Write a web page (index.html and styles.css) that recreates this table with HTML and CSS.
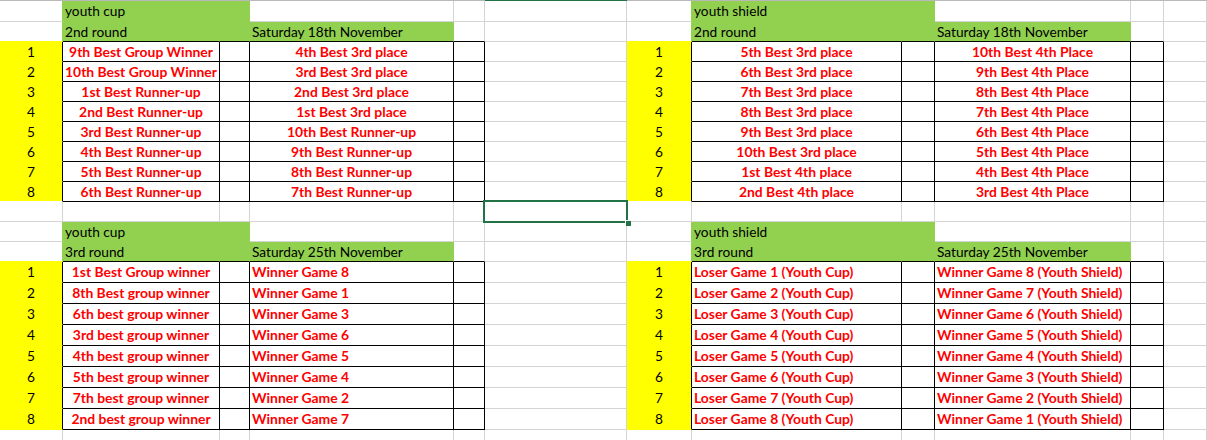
FILE: index.html
```html
<!DOCTYPE html>
<html lang="en">
<head>
<meta charset="utf-8">
<title>Youth Cup / Youth Shield fixtures</title>
<link rel="stylesheet" href="styles.css">
</head>
<body>
<div class="sheet">
  <div class="row hdr">
    <div class="h"></div><div class="h"></div><div class="h"></div><div class="h"></div><div class="h"></div><div class="h sel"></div><div class="h"></div><div class="h"></div><div class="h"></div><div class="h"></div><div class="h"></div><div class="h"></div>
  </div>

  <!-- row 1 -->
  <div class="row r21">
    <div class="c rg"></div><div class="c g">youth cup</div><div class="c g"></div><div class="c"></div><div class="c"></div><div class="c"></div>
    <div class="c rg"></div><div class="c g">youth shield</div><div class="c g"></div><div class="c"></div><div class="c"></div><div class="c"></div>
  </div>
  <!-- row 2 -->
  <div class="row">
    <div class="c rg by"></div><div class="c g bk">2nd round</div><div class="c g bk"></div><div class="c g bk">Saturday 18th November</div><div class="c bk"></div><div class="c"></div>
    <div class="c rg by"></div><div class="c g bk">2nd round</div><div class="c g bk"></div><div class="c g bk">Saturday 18th November</div><div class="c bk"></div><div class="c"></div>
  </div>
  <!-- rows 3-10 -->
  <div class="row">
    <div class="c y num">1</div><div class="c t red ctr">9th Best Group Winner</div><div class="c t"></div><div class="c t red ctr">4th Best 3rd place</div><div class="c t"></div><div class="c"></div>
    <div class="c y num">1</div><div class="c t red ctr">5th Best 3rd place</div><div class="c t"></div><div class="c t red ctr">10th Best 4th Place</div><div class="c t"></div><div class="c"></div>
  </div>
  <div class="row">
    <div class="c y num">2</div><div class="c t red ctr">10th Best Group Winner</div><div class="c t"></div><div class="c t red ctr">3rd Best 3rd place</div><div class="c t"></div><div class="c"></div>
    <div class="c y num">2</div><div class="c t red ctr">6th Best 3rd place</div><div class="c t"></div><div class="c t red ctr">9th Best 4th Place</div><div class="c t"></div><div class="c"></div>
  </div>
  <div class="row">
    <div class="c y num">3</div><div class="c t red ctr">1st Best Runner-up</div><div class="c t"></div><div class="c t red ctr">2nd Best 3rd place</div><div class="c t"></div><div class="c"></div>
    <div class="c y num">3</div><div class="c t red ctr">7th Best 3rd place</div><div class="c t"></div><div class="c t red ctr">8th Best 4th Place</div><div class="c t"></div><div class="c"></div>
  </div>
  <div class="row">
    <div class="c y num">4</div><div class="c t red ctr">2nd Best Runner-up</div><div class="c t"></div><div class="c t red ctr">1st Best 3rd place</div><div class="c t"></div><div class="c"></div>
    <div class="c y num">4</div><div class="c t red ctr">8th Best 3rd place</div><div class="c t"></div><div class="c t red ctr">7th Best 4th Place</div><div class="c t"></div><div class="c"></div>
  </div>
  <div class="row">
    <div class="c y num">5</div><div class="c t red ctr">3rd Best Runner-up</div><div class="c t"></div><div class="c t red ctr">10th Best Runner-up</div><div class="c t"></div><div class="c"></div>
    <div class="c y num">5</div><div class="c t red ctr">9th Best 3rd place</div><div class="c t"></div><div class="c t red ctr">6th Best 4th Place</div><div class="c t"></div><div class="c"></div>
  </div>
  <div class="row">
    <div class="c y num">6</div><div class="c t red ctr">4th Best Runner-up</div><div class="c t"></div><div class="c t red ctr">9th Best Runner-up</div><div class="c t"></div><div class="c"></div>
    <div class="c y num">6</div><div class="c t red ctr">10th Best 3rd place</div><div class="c t"></div><div class="c t red ctr">5th Best 4th Place</div><div class="c t"></div><div class="c"></div>
  </div>
  <div class="row">
    <div class="c y num">7</div><div class="c t red ctr">5th Best Runner-up</div><div class="c t"></div><div class="c t red ctr">8th Best Runner-up</div><div class="c t"></div><div class="c"></div>
    <div class="c y num">7</div><div class="c t red ctr">1st Best 4th place</div><div class="c t"></div><div class="c t red ctr">4th Best 4th Place</div><div class="c t"></div><div class="c"></div>
  </div>
  <div class="row">
    <div class="c y bw num">8</div><div class="c t red ctr">6th Best Runner-up</div><div class="c t"></div><div class="c t red ctr">7th Best Runner-up</div><div class="c t"></div><div class="c"></div>
    <div class="c y bw num">8</div><div class="c t red ctr">2nd Best 4th place</div><div class="c t"></div><div class="c t red ctr">3rd Best 4th Place</div><div class="c t"></div><div class="c"></div>
  </div>
  <!-- row 11 -->
  <div class="row">
    <div class="c"></div><div class="c"></div><div class="c"></div><div class="c"></div><div class="c"></div><div class="c"></div>
    <div class="c"></div><div class="c"></div><div class="c"></div><div class="c"></div><div class="c"></div><div class="c"></div>
  </div>
  <!-- row 12 -->
  <div class="row">
    <div class="c rg"></div><div class="c g">youth cup</div><div class="c g"></div><div class="c"></div><div class="c"></div><div class="c"></div>
    <div class="c rg"></div><div class="c g">youth shield</div><div class="c g"></div><div class="c"></div><div class="c"></div><div class="c"></div>
  </div>
  <!-- row 13 -->
  <div class="row">
    <div class="c rg by"></div><div class="c g bk">3rd round</div><div class="c g bk"></div><div class="c g bk">Saturday 25th November</div><div class="c bk"></div><div class="c"></div>
    <div class="c rg by"></div><div class="c g bk">3rd round</div><div class="c g bk"></div><div class="c g bk">Saturday 25th November</div><div class="c bk"></div><div class="c"></div>
  </div>
  <!-- rows 14-21 -->
  <div class="row r21">
    <div class="c y num">1</div><div class="c t red ctr">1st Best Group winner</div><div class="c t"></div><div class="c t red">Winner Game 8</div><div class="c t"></div><div class="c"></div>
    <div class="c y num">1</div><div class="c t red">Loser Game 1 (Youth Cup)</div><div class="c t"></div><div class="c t red">Winner Game 8 (Youth Shield)</div><div class="c t"></div><div class="c"></div>
  </div>
  <div class="row r21">
    <div class="c y num">2</div><div class="c t red ctr">8th Best group winner</div><div class="c t"></div><div class="c t red">Winner Game 1</div><div class="c t"></div><div class="c"></div>
    <div class="c y num">2</div><div class="c t red">Loser Game 2 (Youth Cup)</div><div class="c t"></div><div class="c t red">Winner Game 7 (Youth Shield)</div><div class="c t"></div><div class="c"></div>
  </div>
  <div class="row r21">
    <div class="c y num">3</div><div class="c t red ctr">6th best group winner</div><div class="c t"></div><div class="c t red">Winner Game 3</div><div class="c t"></div><div class="c"></div>
    <div class="c y num">3</div><div class="c t red">Loser Game 3 (Youth Cup)</div><div class="c t"></div><div class="c t red">Winner Game 6 (Youth Shield)</div><div class="c t"></div><div class="c"></div>
  </div>
  <div class="row r21">
    <div class="c y num">4</div><div class="c t red ctr">3rd best group winner</div><div class="c t"></div><div class="c t red">Winner Game 6</div><div class="c t"></div><div class="c"></div>
    <div class="c y num">4</div><div class="c t red">Loser Game 4 (Youth Cup)</div><div class="c t"></div><div class="c t red">Winner Game 5 (Youth Shield)</div><div class="c t"></div><div class="c"></div>
  </div>
  <div class="row r21">
    <div class="c y num">5</div><div class="c t red ctr">4th best group winner</div><div class="c t"></div><div class="c t red">Winner Game 5</div><div class="c t"></div><div class="c"></div>
    <div class="c y num">5</div><div class="c t red">Loser Game 5 (Youth Cup)</div><div class="c t"></div><div class="c t red">Winner Game 4 (Youth Shield)</div><div class="c t"></div><div class="c"></div>
  </div>
  <div class="row r21">
    <div class="c y num">6</div><div class="c t red ctr">5th best group winner</div><div class="c t"></div><div class="c t red">Winner Game 4</div><div class="c t"></div><div class="c"></div>
    <div class="c y num">6</div><div class="c t red">Loser Game 6 (Youth Cup)</div><div class="c t"></div><div class="c t red">Winner Game 3 (Youth Shield)</div><div class="c t"></div><div class="c"></div>
  </div>
  <div class="row r21">
    <div class="c y num">7</div><div class="c t red ctr">7th best group winner</div><div class="c t"></div><div class="c t red">Winner Game 2</div><div class="c t"></div><div class="c"></div>
    <div class="c y num">7</div><div class="c t red">Loser Game 7 (Youth Cup)</div><div class="c t"></div><div class="c t red">Winner Game 2 (Youth Shield)</div><div class="c t"></div><div class="c"></div>
  </div>
  <div class="row r21">
    <div class="c y num">8</div><div class="c t red ctr">2nd best group winner</div><div class="c t"></div><div class="c t red">Winner Game 7</div><div class="c t"></div><div class="c"></div>
    <div class="c y num">8</div><div class="c t red">Loser Game 8 (Youth Cup)</div><div class="c t"></div><div class="c t red">Winner Game 1 (Youth Shield)</div><div class="c t"></div><div class="c"></div>
  </div>
  <!-- row 22 (partial) -->
  <div class="row last">
    <div class="c"></div><div class="c"></div><div class="c"></div><div class="c"></div><div class="c"></div><div class="c"></div>
    <div class="c"></div><div class="c"></div><div class="c"></div><div class="c"></div><div class="c"></div><div class="c"></div>
  </div>

  <div class="selection"><span class="handle"></span></div>
</div>
</body>
</html>
```

FILE: styles.css
```css
:root {
  --grid: #d4d4d4;
  --green: #92d050;
  --yellow: #ffff00;
  --xl-green: #217346;
}

html, body {
  margin: 0;
  padding: 0;
  background: #ffffff;
}

body {
  font-family: "Lato", "Liberation Sans", sans-serif;
  font-size: 13.7px;
  color: #000000;
  overflow: hidden;
}

.sheet {
  position: relative;
  width: 1207px;
  height: 440px;
  overflow: hidden;
}

.row {
  display: grid;
  grid-template-columns: 63px 157px 30px 204px 31px 142px 65px 210px 33px 196px 33px 1fr;
  height: 20px;
}

.row.hdr {
  height: 1px;
}

.row.r21 {
  height: 21px;
}

.row.last {
  height: 20px;
}

.h {
  background: #b9b9b9;
}

.h.sel {
  background: var(--xl-green);
}

.c {
  box-sizing: border-box;
  min-width: 0;
  display: flex;
  align-items: center;
  padding: 0 2px 0 2px;
  white-space: nowrap;
  border-right: 1px solid var(--grid);
  border-bottom: 1px solid var(--grid);
  line-height: 1;
}

.g {
  background: var(--green);
  border-right-color: var(--green);
  border-bottom-color: var(--green);
}

.y {
  background: var(--yellow);
  border-right-color: #000000;
  border-bottom-color: var(--yellow);
}

.t {
  border-right-color: #000000;
  border-bottom-color: #000000;
}

.rg {
  border-right-color: var(--green);
}

.by {
  border-bottom-color: var(--yellow);
}

.bk {
  border-bottom-color: #000000;
}

.bw {
  border-bottom-color: #ffffff;
}

.red {
  color: #ff0000;
  font-weight: 700;
  font-size: 13.9px;
}

.ctr,
.num {
  justify-content: center;
}

.selection {
  position: absolute;
  left: 483px;
  top: 200px;
  width: 141px;
  height: 19px;
  border: 2px solid var(--xl-green);
}

.handle {
  position: absolute;
  right: -5px;
  bottom: -5px;
  width: 5px;
  height: 5px;
  background: var(--xl-green);
  border-left: 1px solid #ffffff;
  border-top: 1px solid #ffffff;
}
```
